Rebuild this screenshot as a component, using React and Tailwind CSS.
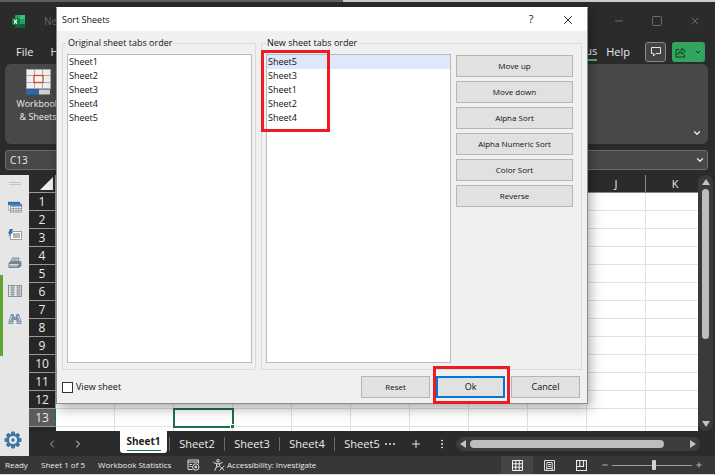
import React, { useState } from 'react';
import { ChevronDown, ChevronLeft, ChevronRight, Minus, MoreVertical, Plus, Square, X } from 'lucide-react';

const columns = ['A', 'B', 'C', 'D', 'E', 'F', 'G', 'H', 'I', 'J', 'K'];
const rows = [1, 2, 3, 4, 5, 6, 7, 8, 9, 10, 11, 12, 13];
const originalOrder = ['Sheet1', 'Sheet2', 'Sheet3', 'Sheet4', 'Sheet5'];
const newOrder = ['Sheet5', 'Sheet3', 'Sheet1', 'Sheet2', 'Sheet4'];
const actions = ['Move up', 'Move down', 'Alpha Sort', 'Alpha Numeric Sort', 'Color Sort', 'Reverse'];

const ExcelLogo = () => (
  <svg viewBox="0 0 13 13" className="h-[13px] w-[13px]">
    <rect x="3" y="0" width="10" height="13" rx="1" fill="#21a366" />
    <rect x="8" y="0" width="5" height="4" fill="#33c481" />
    <rect x="3" y="4" width="5" height="5" fill="#107c41" />
    <rect x="3" y="9" width="10" height="4" rx="1" fill="#185c37" />
    <rect x="0" y="3" width="7" height="7" rx="1" fill="#107c41" />
    <path d="M2 4.6 L5 8.6 M5 4.6 L2 8.6" stroke="#fff" strokeWidth="1.1" />
  </svg>
);

const WorkbookIcon = () => (
  <svg viewBox="0 0 25 26" className="h-[26px] w-[25px]">
    <rect width="25" height="20" fill="#a9a9a9" />
    {[1, 9, 17].map(x =>
      [1, 7, 14].map(y => <rect key={`${x}-${y}`} x={x} y={y} width="7" height={y === 7 ? 6 : 5} fill="#f1f1f1" />)
    )}
    <rect x="8" y="6.5" width="9" height="7" fill="#f6f6f6" stroke="#d9472b" strokeWidth="1.3" />
    <rect y="20.5" width="13" height="5" fill="#2b68b2" />
    <rect x="13" y="20.5" width="11" height="5" fill="#d0d0d0" />
  </svg>
);

const TablesIcon = () => (
  <svg viewBox="0 0 14 12" className="h-3 w-3.5">
    <rect x="0.5" y="1" width="11" height="8" fill="#fff" stroke="#9b9b9b" strokeWidth="0.7" />
    <rect x="2.5" y="3" width="11" height="8" fill="#fff" stroke="#777" strokeWidth="0.7" />
    <rect x="0" y="1" width="12" height="3" fill="#2f6fb0" />
    <rect x="2" y="3" width="12" height="2.5" fill="#4d86bf" />
    <path d="M3 7.5H13.5M3 9.3H13.5M5.3 5.5V11M8 5.5V11M10.8 5.5V11" stroke="#777" strokeWidth="0.6" />
  </svg>
);

const FlashIcon = () => (
  <svg viewBox="0 0 14 12" className="h-3 w-3.5">
    <rect x="2.5" y="2.5" width="11" height="8" fill="#fff" stroke="#888" strokeWidth="0.8" />
    <rect x="5" y="4" width="7" height="5" fill="#b4b4b4" />
    <path d="M2 0H5L3.5 3H5L0.5 8L1.7 4.5H0Z" fill="#2f6fb0" />
  </svg>
);

const PrinterIcon = () => (
  <svg viewBox="0 0 14 12" className="h-3 w-3.5">
    <path d="M4.5 1H11L9.5 5H2.5Z" fill="#d5dae0" stroke="#5f6b78" strokeWidth="0.8" />
    <path d="M0.5 6L3 4H13L13.5 6V9L11 11H0.5Z" fill="#77838f" />
    <path d="M1.5 7.5H10.5M1.5 9H9.5" stroke="#e7ebef" strokeWidth="0.9" />
    <path d="M5 2.5H9M4.5 3.7H8.5" stroke="#66727e" strokeWidth="0.5" />
  </svg>
);

const ColumnsIcon = () => (
  <svg viewBox="0 0 14 12" className="h-3 w-3.5">
    <rect x="0.5" y="0.5" width="13" height="11" fill="#fff" stroke="#777" strokeWidth="0.8" />
    <rect x="3" y="1" width="3" height="10" fill="#a9c1da" />
    <rect x="9" y="1" width="3" height="10" fill="#a9c1da" />
    <path d="M1 2.8H13M1 5H13M1 7.2H13M1 9.3H13M3 1V11M6 1V11M9 1V11M12 1V11" stroke="#888" strokeWidth="0.5" />
  </svg>
);

const BinocularsIcon = () => (
  <svg viewBox="0 0 14 12" className="h-3 w-3.5">
    <path d="M3 1H5.5L6.5 4H7.5L8.5 1H11L13.5 8V11H8.5V7H5.5V11H0.5V8Z" fill="#8093a8" />
    <path d="M3.5 3L2 8M10.5 3L12 8" stroke="#dbe4ee" strokeWidth="1" />
    <path d="M1.5 9.5H4.5M9.5 9.5H12.5" stroke="#b8cbe0" strokeWidth="1" />
  </svg>
);

const GearIcon = () => (
  <svg viewBox="0 0 18 18" className="h-[18px] w-[18px]">
    {[0, 45, 90, 135].map(a => (
      <rect key={a} x="7" y="0.5" width="4" height="17" rx="1" fill="#3f76a5" transform={`rotate(${a} 9 9)`} />
    ))}
    <circle cx="9" cy="9" r="6.5" fill="#3f76a5" />
    <circle cx="9" cy="9" r="4" fill="#e6e6e6" />
    <circle cx="9" cy="9" r="1.8" fill="#3f76a5" />
  </svg>
);

const CommentIcon = () => (
  <svg viewBox="0 0 10 10" className="h-2.5 w-2.5" fill="none" stroke="#e4e4e4">
    <path d="M0.5 0.5H9.5V6.5H5L2.5 9V6.5H0.5Z" />
  </svg>
);

const ShareIcon = () => (
  <svg viewBox="0 0 11 11" className="h-[11px] w-[11px]" fill="none" stroke="#123c24">
    <path d="M4 2.5H1V10H9.5V7.5" />
    <path d="M3 7.5C3 4.5 5 3.5 7 3.5V1L10.3 4.3L7 7.3V5.5C5 5.5 4 6 3 7.5Z" strokeLinejoin="round" />
  </svg>
);

const MacroIcon = () => (
  <svg viewBox="0 0 13 12" className="h-3 w-[13px]" fill="none" stroke="#dedede">
    <path d="M5.5 10.5H1V1H11.5V4.5M1 3H11.5" />
    <path d="M2.5 5.5H5M2.5 7.5H4.5" />
    <circle cx="8.8" cy="8" r="3.2" />
    <circle cx="8.8" cy="8" r="1" fill="#dedede" />
  </svg>
);

const AccessibilityIcon = () => (
  <svg viewBox="0 0 12 12" className="h-3 w-3" fill="none" stroke="#dedede">
    <circle cx="5" cy="1.8" r="1.3" />
    <path d="M0.8 3.5L3.5 4.8V7.5L2 11.3M9.2 3.5L6.5 4.8V6.5M3.5 4.8H6.5M3.7 8L5.5 7.5" strokeLinecap="round" />
    <path d="M6.5 7L11.3 11.5M11.3 7L6.5 11.5" />
  </svg>
);

const NormalViewIcon = () => (
  <svg viewBox="0 0 11 11" className="h-[11px] w-[11px]" fill="none" stroke="#f2f2f2">
    <path d="M0.5 0.5H10.5V10.5H0.5ZM0.5 3.8H10.5M0.5 7.2H10.5M3.8 0.5V10.5M7.2 0.5V10.5" />
  </svg>
);

const PageLayoutIcon = () => (
  <svg viewBox="0 0 11 11" className="h-[11px] w-[11px]" fill="none" stroke="#dcdcdc">
    <path d="M0.5 0.5H10.5V10.5H0.5ZM2.8 2.5H8.2V8.5H2.8ZM4 4.5H7M4 6.5H7M2.8 8V10.5M8.2 8V10.5" />
  </svg>
);

const PageBreakIcon = () => (
  <svg viewBox="0 0 11 11" className="h-[11px] w-[11px]" fill="none" stroke="#e8e8e8">
    <path d="M0.5 0.5H10.5V10.5H0.5ZM0.5 6.5H7.5V0.5M3.8 0.5V6.5" strokeWidth="1.2" />
  </svg>
);

const SheetList = ({ items, selected }) => (
  <ul role="listbox" className="h-[309px] w-[185px] border border-[#b9bcc2] bg-white leading-[14px]">
    {items.map(item => (
      <li
        key={item}
        role="option"
        aria-selected={item === selected}
        className={`h-3.5 px-px ${item === selected ? 'bg-[#dde8fa]' : ''}`}
      >
        {item}
      </li>
    ))}
  </ul>
);

const dialogButton = 'h-[22px] border border-[#b5b5b5] bg-[#e1e1e1] hover:bg-[#e5f1fb]';

const SortDialog = () => {
  const [viewSheet, setViewSheet] = useState(false);

  return (
    <div
      role="dialog"
      aria-label="Sort Sheets"
      className="absolute left-[56px] top-[7px] w-[532px] border border-[#8c8c8c] border-t-white bg-[#f0f0f0] text-[9px] text-[#111] shadow-[2px_4px_12px_rgba(0,0,0,0.35)]"
    >
      <div className="flex h-[23px] items-center bg-white pl-[5px] pr-3">
        <h1 className="flex-1">Sort Sheets</h1>
        <button aria-label="Help" className="w-5 text-[11px]">?</button>
        <button aria-label="Close" className="ml-5">
          <X className="h-3.5 w-3.5" strokeWidth={1.6} />
        </button>
      </div>

      <div className="flex gap-[5px] px-[5px] pt-[5px]">
        <fieldset className="h-[334px] w-[194px] border border-[#dcdcdc] pl-1 pr-[3px]">
          <legend className="h-3.5 px-px leading-[14px]">Original sheet tabs order</legend>
          <div className="pt-1">
            <SheetList items={originalOrder} />
          </div>
        </fieldset>
        <fieldset className="h-[334px] flex-1 border border-[#dcdcdc] px-1">
          <legend className="h-3.5 px-px leading-[14px]">New sheet tabs order</legend>
          <div className="flex gap-[5px] pt-1">
            <SheetList items={newOrder} selected="Sheet5" />
            <div className="flex w-[117px] flex-col gap-1 pt-px text-[8px] font-medium">
              {actions.map(label => (
                <button key={label} className={dialogButton}>
                  {label}
                </button>
              ))}
            </div>
          </div>
        </fieldset>
      </div>

      <div className="flex items-center px-[5px] pb-[5px] pt-1.5">
        <label className="flex flex-1 items-center gap-[3px]">
          <input
            type="checkbox"
            checked={viewSheet}
            onChange={e => setViewSheet(e.target.checked)}
            className="h-[11px] w-[11px] appearance-none border border-[#333] bg-white checked:bg-[#0078d7]"
          />
          View sheet
        </label>
        <div className="flex gap-1.5 pr-0.5">
          <button className={`${dialogButton} w-[69px] text-[8px] font-medium`}>Reset</button>
          <button className="h-[22px] w-[69px] border-2 border-[#0078d7] bg-[#e1e1e1]">Ok</button>
          <button className={`${dialogButton} w-[69px]`}>Cancel</button>
        </div>
      </div>

      {/* Highlight frames */}
      <div className="pointer-events-none absolute left-[204px] top-[42px] h-[82px] w-[69px] border-[3px] border-[#ed1c24]" />
      <div className="pointer-events-none absolute left-[376px] top-[358px] h-[38px] w-[77px] border-[3px] border-[#ed1c24]" />
    </div>
  );
};

const Grid = () => (
  <div className="min-w-0 flex-1 overflow-hidden bg-white">
    <table className="w-[676px] table-fixed border-separate border-spacing-0">
      <thead>
        <tr className="h-[18px] bg-[#2b2b2b] text-[11px] leading-[17px] text-[#e8e8e8]">
          <th className="w-[27px] border-b border-r border-[#9a9a9a] p-0">
            <svg viewBox="0 0 13 13" className="ml-auto mr-0.5 h-[13px] w-[13px]">
              <path d="M13 0V13H0Z" fill="#f2f2f2" />
            </svg>
          </th>
          {columns.map(c => (
            <th key={c} className="w-[59px] border-b border-r border-[#8a8a8a] p-0 font-normal">{c}</th>
          ))}
        </tr>
      </thead>
      <tbody>
        {rows.map(r => (
          <tr key={r} className="h-[18px]">
            <th
              className={`border-b border-r border-[#9a9a9a] p-0 text-[12px] font-normal leading-[17px] text-[#ececec] ${
                r === 13 ? 'border-r-[#107c41] bg-[#5c5c5c]' : 'bg-[#262626]'
              }`}
            >
              {r}
            </th>
            {columns.map(c => (
              <td
                key={c}
                className={`border-b border-r border-[#e1e1e1] p-0 ${
                  r === 13 && c === 'C' ? 'relative outline-2 -outline-offset-1 outline-[#1e7145]' : ''
                }`}
              >
                {r === 13 && c === 'C' && (
                  <span className="absolute -bottom-0.5 -right-0.5 h-1 w-1 border-l border-t border-white bg-[#1e7145]" />
                )}
              </td>
            ))}
          </tr>
        ))}
        <tr className="h-1">
          <th className="bg-[#262626] p-0" />
          {columns.map(c => (
            <td key={c} className="border-r border-[#e1e1e1] p-0" />
          ))}
        </tr>
      </tbody>
    </table>
  </div>
);

const SheetTabs = () => (
  <div className="flex h-[25px] flex-1 items-center bg-[#2b2b2b] pr-[15px] text-[11px] text-[#ececec]">
    <button aria-label="Previous sheet" className="ml-[17px]">
      <ChevronLeft className="h-3 w-3 text-[#a8a8a8]" />
    </button>
    <button aria-label="Next sheet" className="ml-3.5">
      <ChevronRight className="h-3 w-3" />
    </button>
    <button className="ml-9 h-[22px] w-[47px] self-start rounded-b-[3px] bg-white text-[10px] font-bold text-[#222]">
      <span className="mx-auto block w-[34px] border-b border-[#107c41] pb-px leading-[16px]">Sheet1</span>
    </button>
    <div className="ml-0.5 flex">
      {['Sheet2', 'Sheet3', 'Sheet4', 'Sheet5'].map(name => (
        <button key={name} className="w-[55px] border-l border-[#6a6a6a] leading-[14px]">{name}</button>
      ))}
    </div>
    <button aria-label="More sheets" className="-ml-1 flex w-2.5 justify-between">
      <i className="h-0.5 w-0.5 rounded-full bg-[#ececec]" />
      <i className="h-0.5 w-0.5 rounded-full bg-[#ececec]" />
      <i className="h-0.5 w-0.5 rounded-full bg-[#ececec]" />
    </button>
    <button aria-label="Add sheet" className="ml-[15px]">
      <Plus className="h-3 w-3" />
    </button>
    <MoreVertical className="ml-3.5 h-3 w-3" />
    <div className="ml-2 flex h-3.5 flex-1 items-center gap-1 rounded-full bg-[#3c3c3c] px-1">
      <svg viewBox="0 0 6 8" className="h-2 w-1.5"><path d="M6 0V8L0 4Z" fill="#c4c4c4" /></svg>
      <div className="flex-1">
        <div className="h-2 w-[90%] rounded-full bg-[#bdbdbd]" />
      </div>
      <svg viewBox="0 0 6 8" className="h-2 w-1.5"><path d="M0 0V8L6 4Z" fill="#c4c4c4" /></svg>
    </div>
  </div>
);

const StatusBar = () => (
  <footer className="flex h-[18px] items-center bg-[#373737] pl-[5px] pr-3 text-[8px] text-[#ececec]">
    <span className="w-9">Ready</span>
    <span className="w-[57px]">Sheet 1 of 5</span>
    <span className="w-[89px]">Workbook Statistics</span>
    <MacroIcon />
    <span className="ml-[13px] flex flex-1 items-center gap-0.5">
      <AccessibilityIcon />
      Accessibility: Investigate
    </span>
    <button aria-label="Normal view" className="flex h-full w-8 items-center justify-center bg-[#444]"><NormalViewIcon /></button>
    <button aria-label="Page layout" className="flex w-8 justify-center"><PageLayoutIcon /></button>
    <button aria-label="Page break preview" className="flex w-8 justify-center"><PageBreakIcon /></button>
    <button aria-label="Zoom out" className="ml-1"><Minus className="h-2 w-2" /></button>
    <input
      type="range"
      aria-label="Zoom"
      defaultValue={53}
      className="mx-[3px] h-2.5 w-20 appearance-none bg-[linear-gradient(#9a9a9a,#9a9a9a)] bg-[length:100%_1px] bg-center bg-no-repeat [&::-webkit-slider-thumb]:h-2.5 [&::-webkit-slider-thumb]:w-1 [&::-webkit-slider-thumb]:appearance-none [&::-webkit-slider-thumb]:rounded-[1px] [&::-webkit-slider-thumb]:bg-[#d4d4d4]"
    />
    <button aria-label="Zoom in"><Plus className="h-2 w-2" /></button>
  </footer>
);

const App = () => (
  <div className="relative flex h-screen flex-col overflow-hidden bg-[#2b2b2b] font-['Open_Sans','Noto_Sans',sans-serif] text-[#ececec]">
    <div className="flex h-0.5">
      <div className="w-[48%] bg-[#5d6164]" />
      <div className="flex-1 bg-[#c9cfca]" />
    </div>

    <header className="flex h-[38px] items-center pl-3 pr-3.5 text-[10px] text-[#6b6b6b]">
      <ExcelLogo />
      <span className="ml-[19px] flex-1">Ne</span>
      <div className="flex gap-[26px]">
        <button aria-label="Minimize"><Minus className="h-3 w-3" /></button>
        <button aria-label="Maximize"><Square className="h-3 w-3" /></button>
        <button aria-label="Close window"><X className="h-3 w-3" /></button>
      </div>
    </header>

    <nav className="flex h-6 items-center pl-4 pr-2.5 text-[11px]">
      <a href="#file">File</a>
      <a href="#home" className="ml-[17px]">H</a>
      <a href="#plus" className="ml-auto border-b-2 border-[#4cb87c]">Plus</a>
      <a href="#help" className="ml-[9px]">Help</a>
      <button aria-label="Comments" className="ml-[15px] flex h-5 w-[21px] items-center justify-center rounded-[3px] border border-[#8a8a8a] bg-[#444]">
        <CommentIcon />
      </button>
      <button aria-label="Share" className="ml-1.5 flex h-5 w-[33px] items-center justify-center gap-2 rounded-[3px] bg-[#33a55f]">
        <ShareIcon />
        <ChevronDown className="h-2 w-2 text-[#123c24]" strokeWidth={3} />
      </button>
    </nav>

    <section className="ml-[5px] mr-[7px] flex h-20 shrink-0 justify-between rounded-md bg-[#484848] text-[9px] leading-[13px]">
      <button className="flex w-[66px] flex-col items-center self-start pt-[5px]">
        <WorkbookIcon />
        <span className="mt-0.5">Workbook<br />&amp; Sheets</span>
      </button>
      <button aria-label="Collapse ribbon" className="self-end p-1.5">
        <ChevronDown className="h-2.5 w-2.5" strokeWidth={3} />
      </button>
    </section>

    <div className="ml-[5px] mr-[7px] mt-1.5 flex h-5 shrink-0 items-center rounded-[3px] border border-[#6e6e6e] bg-[#484848] pl-1 pr-0.5">
      <input aria-label="Name box" defaultValue="C13" className="w-12 bg-transparent text-[10px]" />
      <button aria-label="Expand formula bar" className="ml-auto">
        <ChevronDown className="h-2.5 w-2.5" strokeWidth={3} />
      </button>
    </div>

    <div className="mt-[5px] flex min-h-0 flex-1">
      <aside className="flex w-[29px] flex-col items-center bg-[#e6e6e6]">
        <div className="mt-[7px] h-[3px] w-3 border-y border-[#c6c6c6]" />
        <div className="flex w-full flex-1 items-start">
          <div className="mt-[90px] h-[81px] w-[3px] bg-[#5fa52f]" />
          <div className="mr-[3px] mt-4 flex flex-1 flex-col items-center gap-4">
            <TablesIcon />
            <FlashIcon />
            <PrinterIcon />
            <ColumnsIcon />
            <BinocularsIcon />
          </div>
        </div>
        <button aria-label="Settings" className="mb-[7px] mr-1">
          <GearIcon />
        </button>
      </aside>

      <div className="flex min-w-0 flex-1 flex-col">
        <div className="flex min-h-0 flex-1">
          <Grid />
          <div className="mr-0.5 flex w-[15px] flex-col items-center gap-1 rounded-full bg-[#3a3a3a] py-1">
            <svg viewBox="0 0 8 6" className="h-1.5 w-2"><path d="M0 6H8L4 0Z" fill="#c4c4c4" /></svg>
            <div className="w-full flex-1 px-1">
              <div className="h-[66%] rounded-full bg-[#bdbdbd]" />
            </div>
            <svg viewBox="0 0 8 6" className="h-1.5 w-2"><path d="M0 0H8L4 6Z" fill="#c4c4c4" /></svg>
          </div>
        </div>
        <div className="flex shrink-0">
          <SheetTabs />
        </div>
      </div>
    </div>

    <StatusBar />
    <div className="h-px bg-[#d9d9d9]" />
    <SortDialog />
  </div>
);

export default App;
